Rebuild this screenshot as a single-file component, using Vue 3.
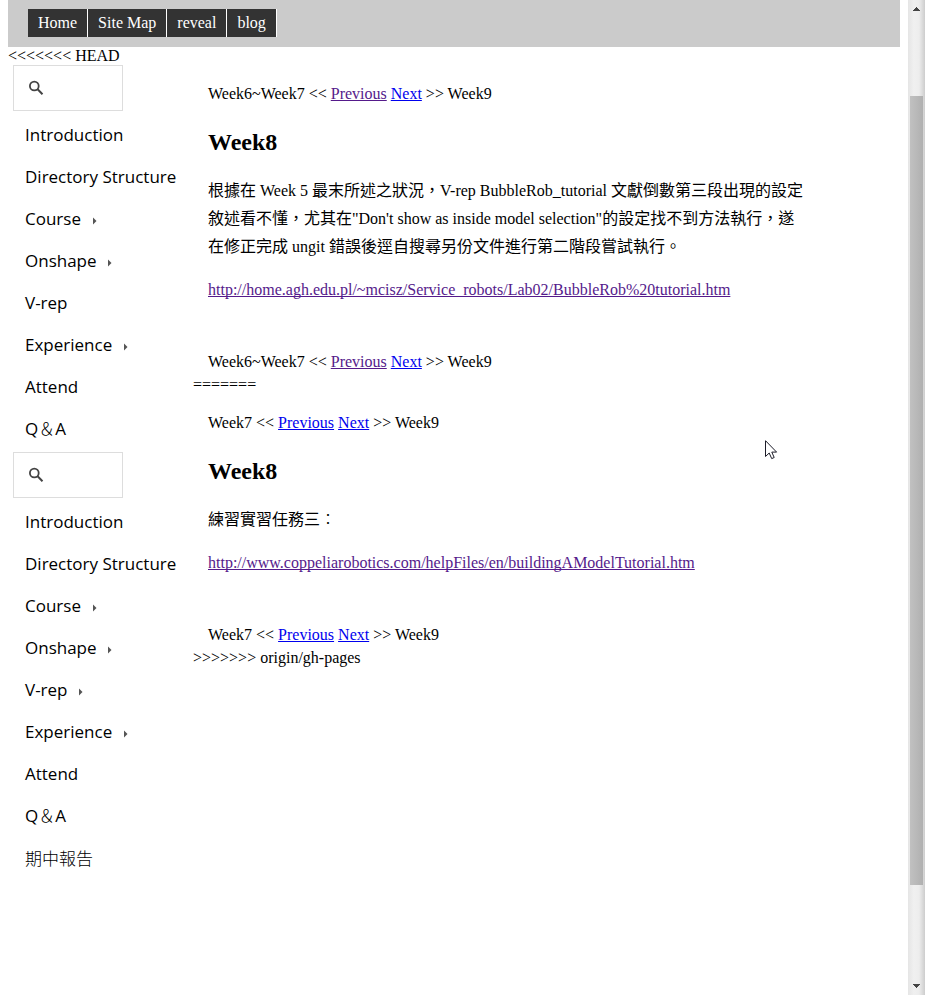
<script setup>
const topLinks = ['Home', 'Site Map', 'reveal', 'blog']

const menus = [
  [
    { label: 'Introduction' },
    { label: 'Directory Structure' },
    { label: 'Course', sub: true },
    { label: 'Onshape', sub: true },
    { label: 'V-rep' },
    { label: 'Experience', sub: true },
    { label: 'Attend' },
    { label: 'Q&A' },
  ],
  [
    { label: 'Introduction' },
    { label: 'Directory Structure' },
    { label: 'Course', sub: true },
    { label: 'Onshape', sub: true },
    { label: 'V-rep', sub: true },
    { label: 'Experience', sub: true },
    { label: 'Attend' },
    { label: 'Q&A' },
    { label: '期中報告', cjk: true },
  ],
]
</script>

<template>
  <div class="window">
    <div class="page">
      <header class="topbar">
        <a v-for="l in topLinks" :key="l" class="toplink">{{ l }}</a>
      </header>
      <div class="marker">&lt;&lt;&lt;&lt;&lt;&lt;&lt; HEAD</div>
      <div class="columns">
        <aside class="sidebar">
          <section v-for="(menu, i) in menus" :key="i" class="block">
            <div class="search">
              <svg width="16" height="16" viewBox="0 0 16 16">
                <circle cx="6.3" cy="6" r="4.4" fill="none" stroke="#444" stroke-width="1.8" />
                <path d="M9.6 9.3 L14.5 14.2" stroke="#444" stroke-width="2" />
              </svg>
            </div>
            <ul class="menu">
              <li v-for="item in menu" :key="item.label" class="item" :class="{ cjk: item.cjk }">
                <span v-if="item.label === 'Q&A'">Q<span class="amp">＆</span>A</span>
                <span v-else>{{ item.label }}</span>
                <svg v-if="item.sub" class="arrow" width="4" height="8" viewBox="0 0 4 8">
                  <path d="M0 0.5 L3.5 4 L0 7.5 Z" fill="#555" />
                </svg>
              </li>
            </ul>
          </section>
        </aside>
        <main class="main">
          <article class="week">
            <div class="pager">Week6~Week7 &lt;&lt; <a class="link visited">Previous</a> <a class="link">Next</a> &gt;&gt; Week9</div>
            <h2 class="title">Week8</h2>
            <p class="text">
              <span class="line">根據在 Week 5 最末所述之狀況，V-rep BubbleRob_tutorial 文獻倒數第三段出現的設定</span>
              <span class="line">敘述看不懂，尤其在"Don't show as inside model selection"的設定找不到方法執行，遂</span>
              <span class="line">在修正完成 ungit 錯誤後逕自搜尋另份文件進行第二階段嘗試執行。</span>
            </p>
            <p class="url"><a class="link visited">http://home.agh.edu.pl/~mcisz/Service_robots/Lab02/BubbleRob%20tutorial.htm</a></p>
            <div class="pager">Week6~Week7 &lt;&lt; <a class="link visited">Previous</a> <a class="link">Next</a> &gt;&gt; Week9</div>
          </article>
          <div class="marker">=======</div>
          <article class="week">
            <div class="pager">Week7 &lt;&lt; <a class="link">Previous</a> <a class="link">Next</a> &gt;&gt; Week9</div>
            <h2 class="title">Week8</h2>
            <p class="text"><span class="line">練習實習任務三<span class="amp">：</span></span></p>
            <p class="url"><a class="link visited">http://www.coppeliarobotics.com/helpFiles/en/buildingAModelTutorial.htm</a></p>
            <div class="pager">Week7 &lt;&lt; <a class="link">Previous</a> <a class="link">Next</a> &gt;&gt; Week9</div>
          </article>
          <div class="marker">&gt;&gt;&gt;&gt;&gt;&gt;&gt; origin/gh-pages</div>
        </main>
      </div>
    </div>
    <div class="scrollbar">
      <svg class="up" width="7" height="4" viewBox="0 0 7 4" shape-rendering="crispEdges">
        <path d="M3 0h1v1h1v1h1v1h1v1H0V3h1V2h1V1h1z" fill="#444" />
      </svg>
      <div class="thumb"></div>
      <svg class="down" width="7" height="4" viewBox="0 0 7 4" shape-rendering="crispEdges">
        <path d="M0 0h7v1H6v1H5v1H4v1H3V3H2V2H1V1H0z" fill="#444" />
      </svg>
    </div>
    <svg class="cursor" width="13" height="20" viewBox="0 0 13 20">
      <path d="M0.5 0.7 V16.5 L4.2 13 L6.7 18.6 L9.2 17.5 L6.8 12.1 H11.6 Z" fill="#fff" stroke="#1c1c28" stroke-width="1" />
    </svg>
  </div>
</template>

<style>
body {
  background: #fff;
}
</style>

<style scoped>
.window {
  position: relative;
  display: flex;
  width: 925px;
  height: 995px;
  overflow: hidden;
  font-family: "Liberation Serif", "Noto Sans CJK TC", serif;
  font-size: 16px;
  color: #000;
}
.page {
  flex: 1;
  padding: 0 8px;
}
.topbar {
  display: flex;
  align-items: flex-start;
  height: 47px;
  padding: 9px 20px 0;
  box-sizing: border-box;
  background: #cbcbcb;
}
.toplink {
  height: 28px;
  padding: 0 10px;
  line-height: 28px;
  color: #fff;
  background: #333;
  border-right: 1px solid #fff;
}
.marker {
  height: 18px;
  line-height: 18px;
}
.columns {
  display: flex;
}
.sidebar {
  width: 185px;
  flex: none;
}
.block {
  margin-bottom: 2px;
}
.search {
  display: flex;
  align-items: center;
  width: 110px;
  height: 46px;
  margin: 0 0 3px 5px;
  padding-left: 14px;
  box-sizing: border-box;
  border: 1px solid #ddd;
}
.menu {
  margin: 0;
  padding: 0 0 0 17px;
  list-style: none;
}
.item {
  display: flex;
  align-items: center;
  height: 42px;
  line-height: 42px;
  font-family: "Open Sans", "Noto Sans CJK TC", sans-serif;
  font-size: 17px;
  color: #000;
  white-space: nowrap;
}
.cjk {
  font-family: "Noto Sans CJK TC", sans-serif;
  font-weight: 300;
}
.amp {
  font-family: "Liberation Serif", "Noto Sans CJK TC", serif;
  font-weight: 300;
}
.arrow {
  margin: 4px 0 0 11.7px;
}
.main {
  flex: 1;
}
.week {
  padding: 15px 15px 0;
}
.pager,
.url {
  height: 28px;
  line-height: 28px;
  white-space: nowrap;
}
.title {
  height: 28px;
  margin: 20px 0;
  line-height: 28px;
  font-size: 24px;
}
.text {
  margin: 0;
  padding-top: 1px;
}
.line {
  display: block;
  height: 28px;
  line-height: 28px;
  white-space: nowrap;
}
.url {
  margin: 15px 0 44px;
}
.link {
  color: #00e;
  text-decoration: underline;
  text-decoration-skip-ink: none;
}
.visited {
  color: #551a8b;
}
.scrollbar {
  display: flex;
  flex-direction: column;
  align-items: center;
  width: 17px;
  flex: none;
  background: linear-gradient(90deg, #e5e5e5, #f0f0f0 35%, #ededed 65%, #cdcdcd);
}
.up {
  margin-top: 7px;
}
.thumb {
  width: 13px;
  height: 789px;
  margin-top: 85px;
  background: linear-gradient(90deg, #c1c1c1, #b0b0b0);
}
.down {
  margin-top: 99px;
}
.cursor {
  position: absolute;
  left: 765px;
  top: 440px;
}
</style>
